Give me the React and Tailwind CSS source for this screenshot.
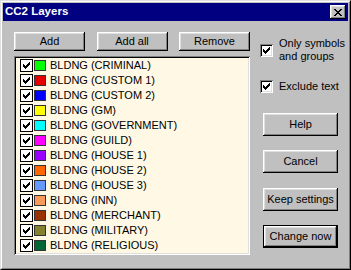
import React from 'react';

const layers = [
    { name: 'BLDNG (CRIMINAL)', color: '#00ff00' },
    { name: 'BLDNG (CUSTOM 1)', color: '#e60000' },
    { name: 'BLDNG (CUSTOM 2)', color: '#0000ff' },
    { name: 'BLDNG (GM)', color: '#ffff00' },
    { name: 'BLDNG (GOVERNMENT)', color: '#00ffff' },
    { name: 'BLDNG (GUILD)', color: '#ff00ff' },
    { name: 'BLDNG (HOUSE 1)', color: '#9900ff' },
    { name: 'BLDNG (HOUSE 2)', color: '#ff6600' },
    { name: 'BLDNG (HOUSE 3)', color: '#6699ff' },
    { name: 'BLDNG (INN)', color: '#f79a5a' },
    { name: 'BLDNG (MERCHANT)', color: '#993300' },
    { name: 'BLDNG (MILITARY)', color: '#85822f' },
    { name: 'BLDNG (RELIGIOUS)', color: '#006633' },
];

const bevel =
    'shadow-[inset_-1px_-1px_0_0_#000,inset_1px_1px_0_0_#fff,inset_-2px_-2px_0_0_#808080,inset_2px_2px_0_0_#dfdfdf]';

const Check = () => (
    <svg width="7" height="7" viewBox="0 0 7 7" shapeRendering="crispEdges">
        <polygon points="0,2 2,4 7,-1 7,2 2,7 0,5" fill="#000" />
    </svg>
);

// list checkbox: flat dark frame
const ListBox = () => (
    <span className="w-[13px] h-[13px] border border-black bg-white flex items-center justify-center shrink-0">
        <Check />
    </span>
);

// dialog checkbox: sunken frame
const SunkenBox = () => (
    <span className="w-[13px] h-[13px] bg-white flex items-center justify-center shrink-0 shadow-[inset_1px_1px_0_0_#808080,inset_-1px_-1px_0_0_#fff,inset_2px_2px_0_0_#000,inset_-2px_-2px_0_0_#dfdfdf]">
        <Check />
    </span>
);

const Btn = ({ children, className = '' }) => (
    <button className={`bg-[#c0c0c0] text-black text-[11px] leading-none flex items-center justify-center ${bevel} ${className}`}>
        {children}
    </button>
);

export default function App() {
    return (
        <div
            className="w-[351px] h-[270px] bg-[#c0c0c0] border border-t-[#dfdfdf] border-l-[#dfdfdf] border-b-black border-r-black"
            style={{ fontFamily: '"Liberation Sans", Arial, sans-serif' }}
        >
            <div className="w-full h-full border border-t-white border-l-white border-b-[#808080] border-r-[#808080] p-px flex flex-col">
                {/* title bar */}
                <div className="h-[18px] bg-[#000080] flex items-center justify-between pl-[2px] pr-[2px]">
                    <span className="text-white font-bold text-[11.5px] leading-none">CC2 Layers</span>
                    <span className={`w-[16px] h-[14px] bg-[#c0c0c0] flex items-center justify-center ${bevel}`}>
                        <svg width="8" height="7" viewBox="0 0 8 7" shapeRendering="crispEdges">
                            <path d="M0 0h2v1h-2zM6 0h2v1h-2zM1 1h2v1h-2zM5 1h2v1h-2zM2 2h4v1h-4zM3 3h2v1h-2zM2 4h4v1h-4zM1 5h2v1h-2zM5 5h2v1h-2zM0 6h2v1h-2zM6 6h2v1h-2z" fill="#000" />
                        </svg>
                    </span>
                </div>

                <div className="flex pl-[11px] text-black">
                    {/* left column */}
                    <div className="w-[236px] pt-[11px] flex flex-col">
                        <div className="flex justify-between">
                            <Btn className="w-[71px] h-[19px]">Add</Btn>
                            <Btn className="w-[71px] h-[19px]">Add all</Btn>
                            <Btn className="w-[71px] h-[19px]">Remove</Btn>
                        </div>
                        <div className="mt-[5px] h-[199px] bg-[#fff8e4] shadow-[inset_1px_1px_0_0_#808080,inset_-1px_-1px_0_0_#fff,inset_2px_2px_0_0_#000,inset_-2px_-2px_0_0_#dfdfdf] pt-[2px] pl-[6px]">
                            {layers.map(l => (
                                <div key={l.name} className="h-[15px] flex items-center">
                                    <ListBox />
                                    <span
                                        className="ml-[1px] w-[12px] h-[11px] border border-[#333]"
                                        style={{ backgroundColor: l.color }}
                                    />
                                    <span className="ml-[4px] text-[11px] leading-[15px] whitespace-nowrap">{l.name}</span>
                                </div>
                            ))}
                        </div>
                    </div>

                    {/* right column */}
                    <div className="ml-[10px] pt-[16px] flex flex-col">
                        <div className="flex items-center">
                            <SunkenBox />
                            <span className="ml-[6px] text-[11px] leading-[13px]">
                                Only symbols
                                <br />
                                and groups
                            </span>
                        </div>
                        <div className="mt-[17px] flex items-center h-[13px]">
                            <SunkenBox />
                            <span className="ml-[6px] text-[11px] leading-[13px]">Exclude text</span>
                        </div>
                        <Btn className="ml-[3px] mt-[20px] w-[75px] h-[23px]">Help</Btn>
                        <Btn className="ml-[3px] mt-[14px] w-[75px] h-[23px]">Cancel</Btn>
                        <Btn className="ml-[3px] mt-[15px] w-[75px] h-[23px]">Keep settings</Btn>
                        <Btn className="ml-[3px] mt-[14px] w-[75px] h-[23px] border border-black">Change now</Btn>
                    </div>
                </div>
            </div>
        </div>
    );
}
